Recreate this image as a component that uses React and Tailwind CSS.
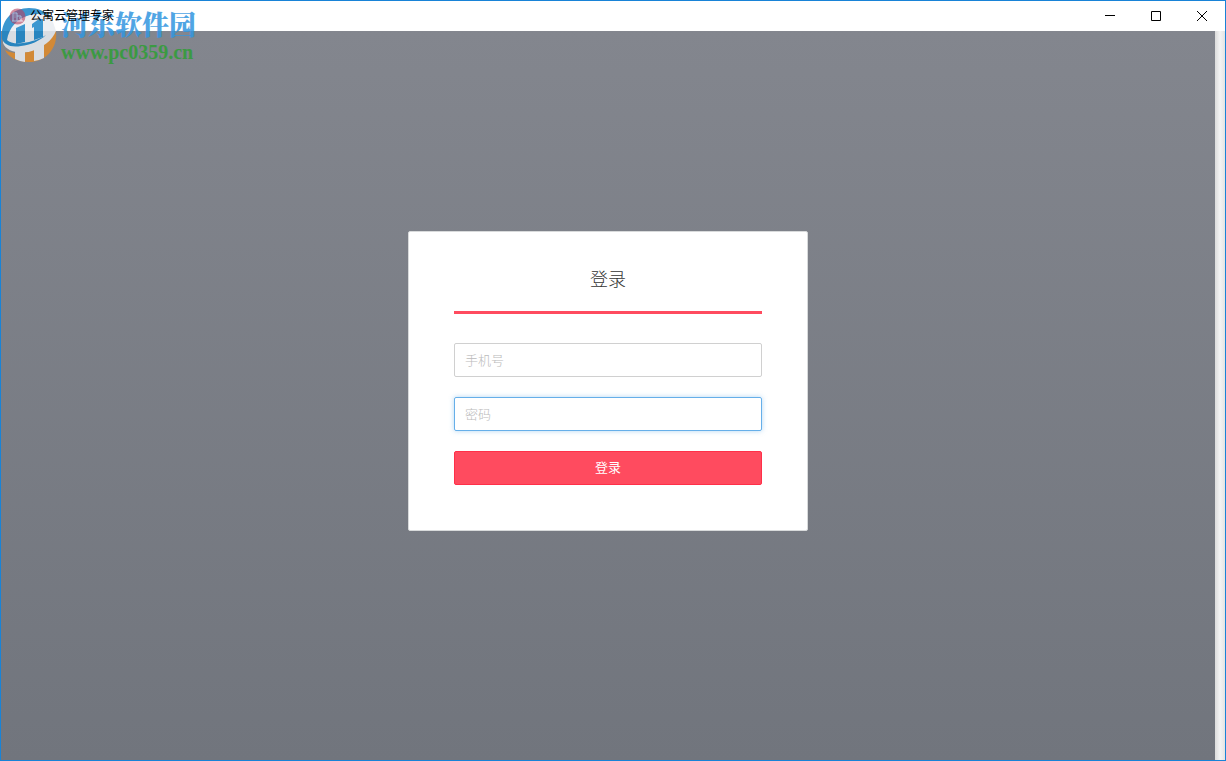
import { useState } from 'react'

function AppIcon() {
  return (
    <svg className="relative z-10 opacity-60" width="17" height="17" viewBox="0 0 17 17" aria-hidden="true">
      <circle cx="8.5" cy="8.5" r="8" fill="#b8405f" />
      <path d="M4 13V5h4v8M8 8h4v5M3 13h11M5.500 7h1M5.500 9h1M10 10h1" fill="none" stroke="#e6dcec" />
    </svg>
  )
}

function SiteLogo() {
  return (
    <svg width="56" height="56" viewBox="0 0 56 56" aria-hidden="true">
      {/* white disc, blue crescent over the top left, orange bowl below */}
      <path d="M2 36C2 20 14 7 34 7c8 0 15 3 18 8l3 9c0 12-10 18-26 21C16 47 5 44 2 36Z" fill="#e9edf1" />
      <path d="M1 32C-1 14 11 1 28 1c9 0 16 3 21 9-6-3-13-4-20-2C16 11 8 21 6 33c3 3 9 4 16 3 8-1 17-4 23-8-6 6-16 10-25 11C9 41 3 37 1 32Z" fill="#1a85c8" />
      <path d="M15 21l9-4v18l-9 2ZM31 17l7-5h4v18l-9 3V20l-2 1Z" fill="#1a85c8" />
      <path d="M55 24c2 17-10 31-27 31C16 55 7 50 4 43c7 4 17 4 27 1 11-4 20-10 24-20Z" fill="#e08a28" />
      <path d="M14 43h10v12l-5-1-5-2ZM33 41l10-5v15l-5 2-5 1Z" fill="#e9edf1" />
    </svg>
  )
}

function Watermark() {
  return (
    <div className="pointer-events-none absolute top-1.5 left-0 flex gap-1 opacity-85">
      <SiteLogo />
      <div className="whitespace-nowrap">
        <p className="font-['Noto_Serif_CJK_SC','Noto_Sans_CJK_SC',serif] text-[27px] leading-[34px] font-black text-[#3296e0]">河东软件园</p>
        <p className="font-['Liberation_Serif','Noto_Sans_CJK_SC',serif] text-xl leading-[22px] font-bold text-[#2f9e36]">www.pc0359.cn</p>
      </div>
    </div>
  )
}

function TitleBar() {
  return (
    <header className="flex h-[30px] shrink-0 items-center bg-white pl-2 text-black">
      <AppIcon />
      <h1 className="relative z-10 ml-1 pb-0.5 text-xs leading-4">公寓云管理专家</h1>
      <div className="ml-auto flex h-full">
        <button type="button" aria-label="最小化" className="flex w-[46px] items-center justify-center">
          <svg width="10" height="10" viewBox="0 0 10 10">
            <path d="M0 4.500h10" stroke="black" />
          </svg>
        </button>
        <button type="button" aria-label="最大化" className="flex w-[46px] items-center justify-center">
          <svg width="10" height="10" viewBox="0 0 10 10">
            <path d="M.5.500h9v9h-9Z" fill="none" stroke="black" />
          </svg>
        </button>
        <button type="button" aria-label="关闭" className="flex w-[46px] items-center justify-center">
          <svg width="10" height="10" viewBox="0 0 10 10">
            <path d="m0 0 10 10M10 0 0 10" stroke="black" />
          </svg>
        </button>
      </div>
    </header>
  )
}

export default function App() {
  const [phone, setPhone] = useState('')
  const [password, setPassword] = useState('')

  const handleSubmit = (e) => {
    e.preventDefault()
  }

  return (
    <div className="relative flex min-h-screen flex-col border border-[#1883d7] font-['Noto_Sans_CJK_SC',sans-serif]">
      <TitleBar />

      <div className="flex flex-1">
        <main className="flex flex-1 items-center justify-center bg-linear-to-b from-[#83868e] to-[#71757d] pb-[29px]">
          <form onSubmit={handleSubmit} className="w-full max-w-[400px] rounded-xs border border-[#d8dadb] bg-white px-[45px] pt-8 pb-[45px]">
            <h2 className="border-b-3 border-[#ff4b5f] pb-[19px] text-center text-lg leading-7 font-light text-[#333]">登录</h2>

            <div className="mt-[29px] flex flex-col gap-5 text-[13px] leading-5">
              <input
                type="text"
                name="phone"
                aria-label="手机号"
                placeholder="手机号"
                value={phone}
                onChange={(e) => setPhone(e.target.value)}
                className="h-[34px] w-full rounded-xs border border-[#d0d0d0] px-2.5 pb-0.5 font-light outline-none placeholder:text-[#bbb]"
              />
              <input
                type="password"
                name="password"
                aria-label="密码"
                placeholder="密码"
                value={password}
                onChange={(e) => setPassword(e.target.value)}
                className="h-[34px] w-full rounded-xs border border-[#66afe9] px-2.5 pb-0.5 font-light shadow-[0_0_5px_#66afe980] outline-none placeholder:text-[#bbb]"
              />
              <button type="submit" className="h-[34px] rounded-xs border border-[#ff3049] bg-[#ff4b5f] pb-0.5 text-white">
                登录
              </button>
            </div>
          </form>
        </main>
        <div className="w-2.5 bg-linear-to-r from-[#dcdcdc] via-[#f3f3f3] to-[#e4e4e4]" />
      </div>

      <Watermark />
    </div>
  )
}
